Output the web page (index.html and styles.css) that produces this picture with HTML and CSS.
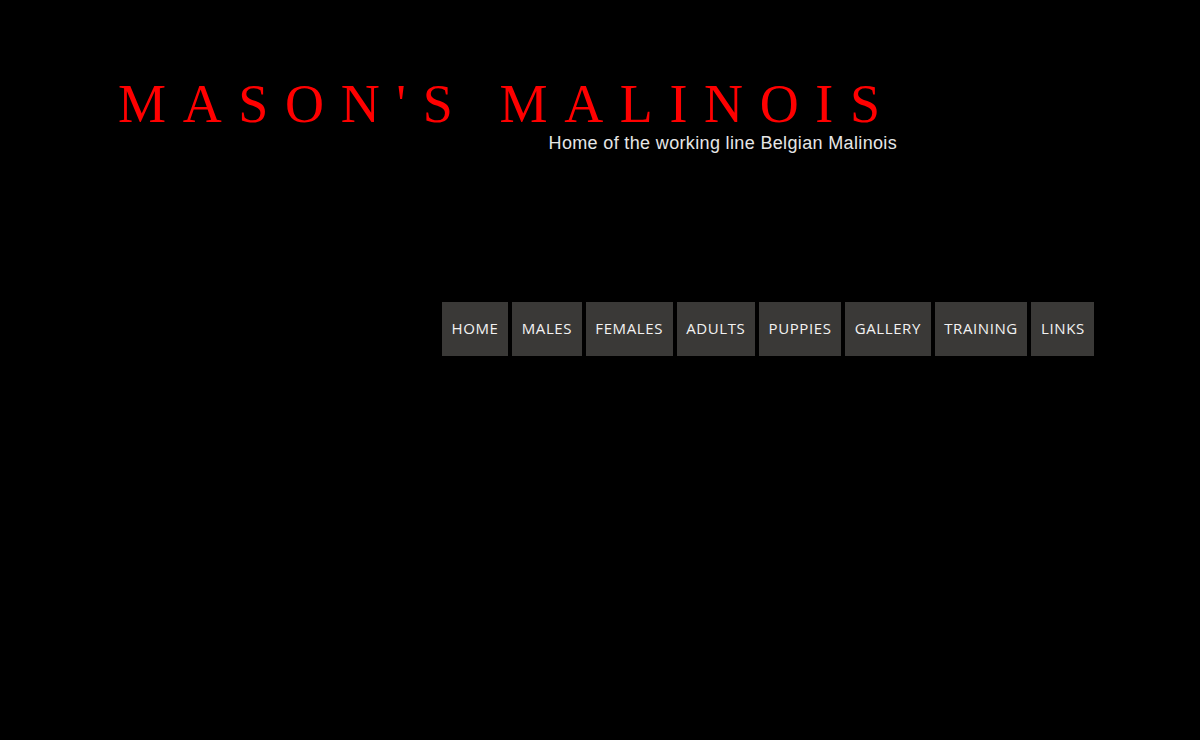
FILE: index.html
```html
<!DOCTYPE html>
<html>
<head>
<meta charset="utf-8">
<link rel="stylesheet" href="styles.css">
</head>
<body>
<div class="page">
  <header class="header">
    <div class="brand">
      <h1 class="title">MASON'S MALINOIS</h1>
      <p class="tagline">Home of the working line Belgian Malinois</p>
    </div>
  </header>
  <nav class="nav">
    <a class="nav-item" href="#">HOME</a>
    <a class="nav-item" href="#">MALES</a>
    <a class="nav-item" href="#">FEMALES</a>
    <a class="nav-item" href="#">ADULTS</a>
    <a class="nav-item" href="#">PUPPIES</a>
    <a class="nav-item" href="#">GALLERY</a>
    <a class="nav-item" href="#">TRAINING</a>
    <a class="nav-item" href="#">LINKS</a>
  </nav>
</div>
</body>
</html>
```

FILE: styles.css
```css
html, body {
  margin: 0;
  padding: 0;
  background: #000;
}
body {
  width: 1200px;
  height: 740px;
  overflow: hidden;
}
.page {
  display: flex;
  flex-direction: column;
}
.header {
  padding: 75px 0 0 118px;
}
.brand {
  display: inline-flex;
  flex-direction: column;
  align-items: flex-end;
}
.title {
  margin: 0;
  font-family: "Liberation Serif", serif;
  font-weight: normal;
  font-size: 54px;
  line-height: 58px;
  letter-spacing: 16.65px;
  color: #ff0000;
  margin-right: -16.65px;
}
.tagline {
  margin: 0 -17px 0 0;
  font-family: "Liberation Sans", Arial, sans-serif;
  font-size: 18px;
  line-height: 21px;
  color: #e6e6e6;
  letter-spacing: 0.35px;
}
.nav {
  display: flex;
  gap: 4px;
  margin: 148px 0 0 442px;
}
.nav-item {
  display: block;
  background: #3a3937;
  color: #f2f2f2;
  text-decoration: none;
  font-family: "Open Sans", sans-serif;
  font-size: 15px;
  line-height: 53px;
  padding-bottom: 1px;
  letter-spacing: 0.6px;
  padding: 0 9.6px 1px;
}
```
